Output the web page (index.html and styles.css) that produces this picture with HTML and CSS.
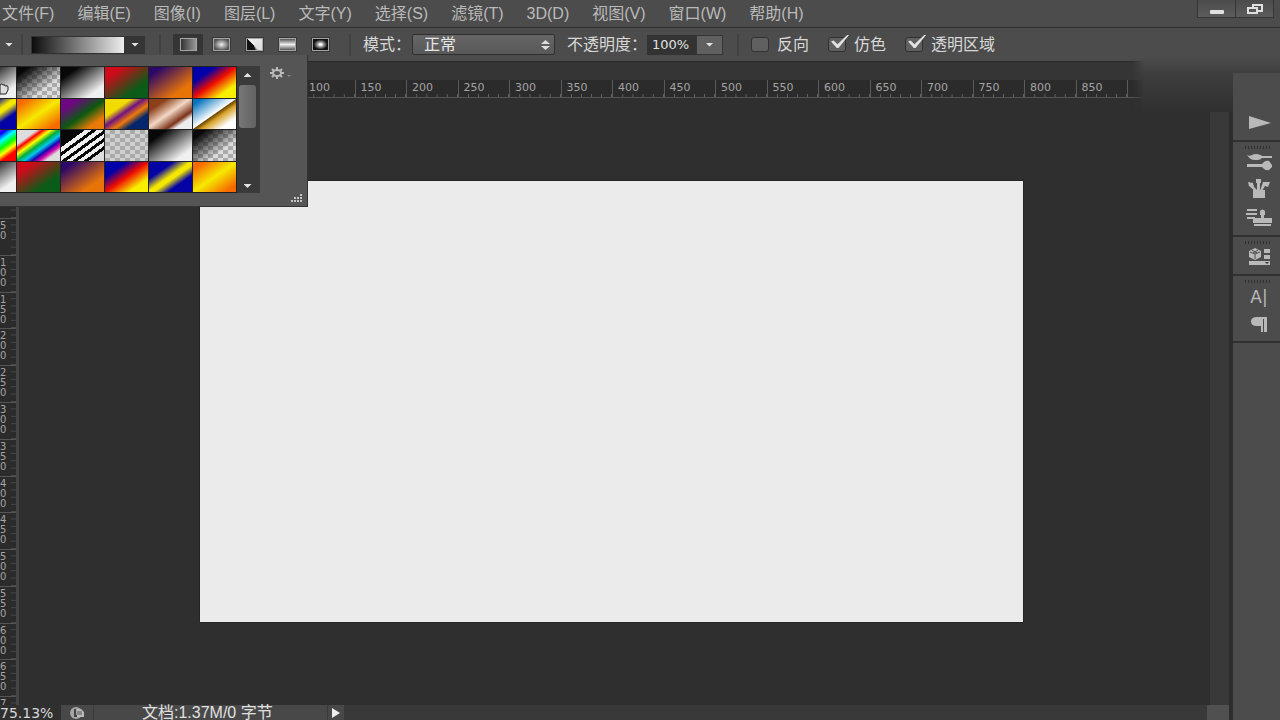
FILE: index.html
```html
<!DOCTYPE html>
<html lang="zh-CN">
<head>
<meta charset="utf-8">
<title>图像编辑器</title>
<link rel="stylesheet" href="styles.css">
</head>
<body>
<div class="app">
  <header class="menubar">
    <nav class="menus">
      <button class="menu">文件(F)</button><button class="menu">编辑(E)</button><button class="menu">图像(I)</button><button class="menu">图层(L)</button><button class="menu">文字(Y)</button><button class="menu">选择(S)</button><button class="menu">滤镜(T)</button><button class="menu">3D(D)</button><button class="menu">视图(V)</button><button class="menu">窗口(W)</button><button class="menu">帮助(H)</button>
    </nav>
    <div class="window-buttons">
      <button class="win" aria-label="最小化"><svg width="16" height="14"><rect x="1" y="8" width="14" height="4" rx="1" fill="#e0e0e0"/></svg></button>
      <button class="win" aria-label="还原"><svg width="18" height="14" fill="none" stroke="#e0e0e0" stroke-width="2"><path d="M7 6V3h9v6h-4"/><path d="M2 6h9v5H2z"/></svg></button>
    </div>
  </header>

  <div class="options">
    <button class="preset-arrow" aria-label="工具预设"><i class="caret"></i></button>
    <span class="sep"></span>
    <button class="gradient-preview" aria-label="编辑渐变"></button>
    <button class="gradient-drop" aria-label="打开渐变拾色器"><i class="caret"></i></button>
    <span class="sep sep-wide"></span>
    <div class="types">
      <button class="type active" aria-label="线性渐变"><i class="shape linear"></i></button>
      <button class="type" aria-label="径向渐变"><i class="shape radial"></i></button>
      <button class="type" aria-label="角度渐变"><i class="shape angle"></i></button>
      <button class="type" aria-label="对称渐变"><i class="shape reflected"></i></button>
      <button class="type" aria-label="菱形渐变"><i class="shape diamond"></i></button>
    </div>
    <span class="sep sep-wide"></span>
    <label class="mode-label" for="mode">模式：</label>
    <div class="select-wrap">
      <select id="mode"><option>正常</option></select>
      <svg class="updown" width="9" height="10" fill="#ddd"><path d="M0 4L4.500 0L9 4zM0 6h9L4.500 10z"/></svg>
    </div>
    <label class="opacity-label" for="opacity">不透明度：</label>
    <input id="opacity" class="opacity" type="text" value="100%">
    <button class="opacity-drop" aria-label="不透明度滑块"><i class="caret"></i></button>
    <span class="sep"></span>
    <label class="check"><input type="checkbox">反向</label>
    <label class="check"><input type="checkbox" checked>仿色</label>
    <label class="check"><input type="checkbox" checked>透明区域</label>
  </div>

  <div class="workspace">
    <main class="document">
      <div class="tabs"></div>
      <div class="ruler-x">
        <div class="scale-x">
          <span>100</span><span>150</span><span>200</span><span>250</span><span>300</span><span>350</span><span>400</span><span>450</span><span>500</span><span>550</span><span>600</span><span>650</span><span>700</span><span>750</span><span>800</span><span>850</span>
        </div>
      </div>
      <div class="stage">
        <div class="ruler-y">
          <span></span><span></span><span></span><span></span><span>50</span><span>100</span><span>150</span><span>200</span><span>250</span><span>300</span><span>350</span><span>400</span><span>450</span><span>500</span><span>550</span><span>600</span><span>650</span><span>7</span>
        </div>
        <div class="pasteboard"><div class="canvas"></div></div>
        <div class="vscroll"></div>
      </div>
      <footer class="status">
        <span class="zoom">75.13%</span>
        <button class="share" aria-label="预览"><svg width="18" height="14"><circle cx="8" cy="7" r="6" fill="#a5a5a5"/><path d="M7 3v7h6" fill="none" stroke="#444" stroke-width="2"/><path d="M9 3h4l3 3v5H9z" fill="#bbb"/><path d="M9 6h5M9 8h5" stroke="#555"/></svg></button>
        <span class="info">文档:1.37M/0 字节</span>
        <button class="more" aria-label="状态信息"><svg width="10" height="11"><path d="M1 1l8 5-8 5z" fill="#eee"/></svg></button>
        <span class="corner"></span>
      </footer>
      <div class="haze"></div>
    </main>

    <aside class="dock">
      <div class="group first">
        <button aria-label="动作"><svg width="26" height="26"><path d="M3 6l22 7-22 6z" fill="#b9b9b9"/></svg></button>
      </div>
      <div class="group grip">
        <button aria-label="画笔"><svg width="26" height="26" fill="#b9b9b9"><path d="M1 6c4 2 5-1 9-1 3 0 5 1 6 2h10v2H16c-2 2-4 2-7 2-4 0-6-2-8-5zM1 15h15c2-3 5-4 7-3l3 4v2l-3 3c-3 1-5-1-7-3H1z"/></svg></button>
        <button aria-label="画笔预设"><svg width="26" height="26" fill="#b9b9b9"><path d="M7 13h12v8H7zM2 5l5 1 1 4 4 4H9L3 9zM10 2h5v4h-1v8h-3V6h-1zM17 5h7l-2 5-3-1-3 5h-2z"/></svg></button>
        <button aria-label="仿制源"><svg width="26" height="26" fill="#b9b9b9"><path d="M1 4h10v2H1zM0 8h11v2H0zM1 12h8v2H1zM14 6q2-3 5 0v4h-1v3h8v5H7v-5h8v-3h-1zM8 19h17v2H8z"/></svg></button>
      </div>
      <div class="group grip">
        <button aria-label="属性"><svg width="26" height="26"><path d="M3 7l6-3 6 3v6l-6 3-6-3zM18 5h6v4h-6zM18 11h6v4h-6zM3 17h21v4H3z" fill="#b9b9b9"/><path d="M4 8l5 2 5-2M9 10v5M6 6l5 3M12 6L7 9" fill="none" stroke="#4c4c4c"/><path d="M19 18h4l-2 2z" fill="#333"/></svg></button>
      </div>
      <div class="group grip">
        <button class="glyph" aria-label="字符">A|</button>
        <button aria-label="段落"><svg width="26" height="26" fill="#b9b9b9"><path d="M21 6v15h-3V8h-1v13h-2v-6h-4q-6 0-6-4.500T11 6z"/></svg></button>
      </div>
    </aside>
  </div>

  <section class="picker" aria-label="渐变拾色器">
    <div class="swatches">
      <button class="sw bw"></button><button class="sw fade-black"></button><button class="sw bw"></button><button class="sw red-green"></button><button class="sw violet-orange"></button><button class="sw blue-red-yellow"></button>
      <button class="sw blue-yellow-blue"></button><button class="sw orange-yellow"></button><button class="sw violet-green-orange"></button><button class="sw yellow-violet"></button><button class="sw copper"></button><button class="sw chrome"></button>
      <button class="sw spectrum"></button><button class="sw rainbow"></button><button class="sw stripes"></button><button class="sw clear"></button><button class="sw bw"></button><button class="sw fade-black"></button>
      <button class="sw bw"></button><button class="sw red-green"></button><button class="sw violet-orange"></button><button class="sw blue-red-yellow"></button><button class="sw blue-yellow-blue"></button><button class="sw orange-yellow"></button>
    </div>
    <div class="picker-scroll">
      <i class="caret up"></i><i class="thumb"></i><i class="caret down"></i>
    </div>
    <div class="picker-side">
      <button class="gear" aria-label="选项"><svg width="24" height="14"><g fill="none" stroke="#bbb"><ellipse cx="8" cy="7" rx="4" ry="3" stroke-width="2"/><path d="M8 1v3M8 10v3M1 7h3M12 7h3M3 3l2 2M13 3l-2 2M3 11l2-2M13 11l-2-2" stroke-width="2"/></g><path d="M18 9h4l-2 2z" fill="#888"/></svg></button>
      <svg class="resize" width="12" height="9" fill="#c4c4c4"><path d="M9 0h2v2H9zM6 3h2v2H6zM9 3h2v2H9zM3 3h2v2H3zM0 6h2v2H0zM3 6h2v2H3zM6 6h2v2H6zM9 6h2v2H9z"/></svg>
    </div>
    <svg class="hand" width="9" height="14"><path d="M0 3q2-2 3 0 2-1 2 1 3-1 3 1v3L6 12H0z" fill="#ddd" stroke="#222"/></svg>
  </section>
</div>
</body>
</html>
```
FILE: styles.css
```css
* { box-sizing: border-box; }
body {
  margin: 0;
  background: #2f2f2f;
  color: #d8d8d8;
  font: 16px/20px "Liberation Sans", "Noto Sans CJK SC", sans-serif;
}
button { margin: 0; padding: 0; border: 0; background: none; color: inherit; font: inherit; }
svg { display: block; }
.app { position: relative; display: flex; flex-direction: column; height: 100vh; overflow: hidden; }

.menubar { display: flex; justify-content: space-between; height: 28px; background: #4c4c4c; border-bottom: 1px solid #303030; }
.menus { display: flex; align-items: center; gap: 23px; padding-left: 2px; color: #bababa; white-space: nowrap; }
.window-buttons { display: flex; height: 18px; margin-right: 6px; }
.win { display: flex; align-items: center; justify-content: center; width: 39px; border: 1px solid #353535; border-top: 0; background: linear-gradient(#4b4b4b, #5c5c5c); }
.win + .win { margin-left: -1px; }

.options { display: flex; align-items: center; height: 34px; background: #4c4c4c; border-bottom: 1px solid #292929; white-space: nowrap; }
.caret { display: block; width: 8px; height: 4px; background: #e4e4e4; clip-path: polygon(0 0, 100% 0, 50% 100%); }
.caret.up { clip-path: polygon(50% 0, 100% 100%, 0 100%); }
.preset-arrow { padding: 8px 12px 8px 5px; flex: none; width: 21px; }
.sep { flex: none; width: 2px; height: 22px; background: #414141; }
.sep-wide { margin: 0 12px 0 14px; }
.gradient-preview { flex: none; width: 94px; height: 18px; margin-left: 8px; border: 1px solid #333; background: linear-gradient(90deg, #0c0c0c, #eee); }
.gradient-drop { flex: none; display: grid; place-items: center; width: 20px; height: 18px; background: #353535; }
.types { display: flex; gap: 3px; }
.type { display: grid; place-items: center; width: 30px; height: 22px; }
.type.active { background: #353535; }
.shape { width: 17px; height: 13px; border: 1px solid #a5a5a5; outline: 1px solid #383838; }
.linear { background: linear-gradient(90deg, #333, #999); }
.radial { background: radial-gradient(#eee, #555 75%); }
.angle { background: conic-gradient(from 315deg at 45% 55%, #eee 0 5%, #ddd 50%, #111 60%, #111 97%); }
.reflected { background: linear-gradient(#555, #eee 50%, #555); }
.diamond { background: radial-gradient(#fff 10%, #999 30%, #111 65%); }
.mode-label { width: 49px; overflow: hidden; }
.select-wrap { position: relative; flex: none; width: 143px; height: 21px; }
.select-wrap select { appearance: none; display: block; width: 100%; height: 100%; padding: 0 11px; border: 1px solid #303030; border-radius: 2px; background: linear-gradient(#666, #585858); color: #e6e6e6; font: inherit; line-height: 18px; }
.updown { position: absolute; right: 5px; top: 6px; }
.opacity-label { width: 80px; margin-left: 12px; overflow: hidden; }
.opacity { flex: none; width: 49px; height: 20px; padding: 0 0 0 5px; border: 0; background: #333; color: #e2e2e2; font: 13px/20px "DejaVu Sans", sans-serif; }
.opacity-drop { flex: none; display: grid; place-items: center; width: 27px; height: 20px; margin-right: 14px; border: 1px solid #353535; background: #606060; }
.check { display: flex; align-items: center; gap: 8px; margin-left: 12px; }
.check + .check { margin-left: 19px; }
.check input { appearance: none; position: relative; flex: none; width: 18px; height: 15px; margin: 0; border: 1px solid #303030; border-radius: 3px; background: #606060; }
.check input:checked::after { content: ""; position: absolute; left: 2px; top: -3px; width: 18px; height: 13px; background: #e2e2e2; clip-path: polygon(0 50%, 14% 42%, 36% 72%, 90% 0, 100% 0, 42% 100%, 32% 100%); }

.workspace { flex: 1; display: flex; min-height: 0; }
.document { position: relative; flex: 1; display: flex; flex-direction: column; min-width: 0; border-right: 4px solid #2d2d2d; }
.tabs { height: 18px; background: #353535; }
.ruler-x { height: 18px; padding: 0 101px 0 303px; background: #2b2b2b; border-bottom: 1px solid #555; }
.scale-x { display: grid; grid-template-columns: repeat(16, 1fr); height: 17px; border-right: 1px solid #5a5a5a; }
.scale-x span { position: relative; padding-left: 5px; border-left: 1px solid #5a5a5a; color: #a4a4a4; font: 11px/15px "DejaVu Sans", sans-serif; }
.scale-x span::after { content: ""; position: absolute; left: 0; right: 0; bottom: 0; height: 3px; background: linear-gradient(90deg, transparent 88%, #606060 88%) 0 0 / 20% 100%; }

.stage { flex: 1; display: flex; min-height: 0; overflow: hidden; }
.ruler-y { display: grid; grid-template-rows: repeat(18, 1fr); flex: none; width: 19px; height: 662px; margin-top: -27px; border-right: 3px solid #454545; background: #2b2b2b; }
.ruler-y span { position: relative; width: 7px; min-height: 0; padding-top: 3px; color: #a4a4a4; font: 10px/10px "DejaVu Sans", sans-serif; word-break: break-all; }
.ruler-y span::before { content: ""; position: absolute; left: 0; top: 0; width: 16px; height: 1px; background: #555; }
.ruler-y span::after { content: ""; position: absolute; left: 11px; top: 0; bottom: 0; width: 5px; background: linear-gradient(transparent 85%, #484848 85%) 0 0 / 100% 20%; }
.pasteboard { flex: 1; display: flex; padding: 83px 187px 83px 181px; background: #2f2f2f; }
.canvas { flex: 1; background: #ebebeb; box-shadow: 0 0 0 1px #242424; }
.vscroll { width: 19px; background: #393939; }

.status { display: flex; align-items: center; flex: none; height: 15px; background: #393939; white-space: nowrap; }
.zoom { width: 61px; height: 15px; background: #303030; font: 14px/16px "DejaVu Sans", sans-serif; }
.share { display: grid; place-items: center; width: 33px; height: 15px; border-right: 1px solid #3a3a3a; background: #484848; }
.info { flex: none; width: 234px; height: 15px; padding-left: 48px; border-right: 1px solid #3a3a3a; background: #484848; color: #e0e0e0; line-height: 16px; }
.more { display: grid; place-items: center; width: 16px; height: 15px; background: #484848; }
.corner { width: 22px; height: 15px; margin-left: auto; background: #505050; }
.haze { position: absolute; top: -4px; right: -51px; width: 148px; height: 54px; background: linear-gradient(#4a4a4a, #3e3e3e 30%, #363636 65%, #303030); -webkit-mask: linear-gradient(90deg, transparent, #000 12px); mask: linear-gradient(90deg, transparent, #000 12px); }

.dock { position: relative; flex: none; width: 47px; margin-top: 11px; background: #4c4c4c; }
.group { display: flex; flex-direction: column; align-items: center; gap: 2px; padding: 7px 0 4px 5px; border-bottom: 2px solid #303030; }
.group.first { padding-top: 37px; padding-bottom: 4px; }
.group.grip { background: repeating-linear-gradient(90deg, #303030 0 1px, transparent 1px 3px) 12px 4px / 27px 3px no-repeat; }
.group button { width: 26px; height: 26px; }
.group .glyph { color: #b9b9b9; font: 17px/28px "DejaVu Sans", sans-serif; }

.picker { position: absolute; left: 0; top: 55px; display: flex; width: 308px; height: 152px; padding: 11px 0 13px; border: solid #333; border-width: 0 1px 1px 0; background: #555; }
.swatches { display: grid; grid-template-columns: 16px repeat(5, 43px); grid-template-rows: repeat(4, 1fr); gap: 1px; padding: 1px 0; width: 237px; background: #222; }
.sw { background-size: 100% 100%; }
.swatches .sw:nth-child(6n+1) { background-position: 100% 0; background-size: 43px 100%; }
.bw { background-image: linear-gradient(to bottom right, #080808 20%, #f0f0f0 80%); }
.fade-black { background: linear-gradient(to bottom right, #080808 14%, transparent 68%), conic-gradient(#aaa 25%, #ddd 0 50%, #aaa 0 75%, #ddd 0) 0 0 / 10px 8px; }
.swatches .fade-black { background-size: 100% 100%, 10px 8px; }
.red-green { background-image: linear-gradient(to bottom right, #cf0a1a 20%, #0a5c18 72%); }
.violet-orange { background-image: linear-gradient(to bottom right, #2d0867 15%, #e87408 75%); }
.blue-red-yellow { background-image: linear-gradient(to bottom right, #0000aa 25%, #ee0b00 50%, #f8ee00 78%); }
.blue-yellow-blue { background-image: linear-gradient(to bottom right, #0503a5 28%, #f4e800 48% 55%, #0503a5 72%); }
.orange-yellow { background-image: linear-gradient(to bottom right, #f66a00 12%, #f6ea00 50%, #f66a00 88%); }
.violet-green-orange { background-image: linear-gradient(to bottom right, #6e0781 20%, #0b5910 52%, #ea7a08 80%); }
.yellow-violet { background-image: linear-gradient(to bottom right, #f2dc00 30%, #6f1282 45%, #ee7a08 60%, #04266c 75%); }
.copper { background-image: linear-gradient(to bottom right, #8c4019 20%, #f3d8c6 47%, #7a3318 70%, #eee 80%); }
.chrome { background-image: linear-gradient(to bottom right, #0874bf 10%, #fff 49%, #6b4700 51%, #d8a22a 60%, #fff 82%); }
.spectrum { background-image: linear-gradient(to bottom right, #f0f 25%, #00f 38%, #0ff 50%, #0f0 62%, #ff0 73%, #f00 83%); }
.rainbow { background-image: linear-gradient(to bottom right, #ddd 23%, #f00 30%, #ff0 39%, #00ad38 49%, #00c9ed 58%, #1a04b2 67%, #d405a9 75%, #ddd 83%); }
.stripes { background-image: linear-gradient(to bottom right, #080808 28%, #eee 28% 36%, #080808 36% 42%, #eee 42% 50%, #080808 50% 56%, #eee 56% 63%, #080808 63% 69%, #eee 69% 76%, #080808 76% 82%, #ddd 82%); }
.clear { background-image: conic-gradient(#aaa 25%, #d0d0d0 0 50%, #aaa 0 75%, #d0d0d0 0); }
.swatches .clear { background-size: 10px 8px; }
.picker-scroll { display: flex; flex-direction: column; align-items: center; width: 23px; padding: 7px 2px 5px 0; background: #3a3a3a; }
.thumb { width: 17px; height: 43px; margin-top: 8px; border-radius: 3px; background: linear-gradient(90deg, #777, #626262); }
.caret.down { margin-top: auto; }
.picker-side { flex: 1; display: flex; flex-direction: column; justify-content: space-between; align-items: flex-end; }
.gear { margin-right: 14px; }
.resize { margin: 0 4px -10px 0; }
.hand { position: absolute; left: 0; top: 27px; }
```
